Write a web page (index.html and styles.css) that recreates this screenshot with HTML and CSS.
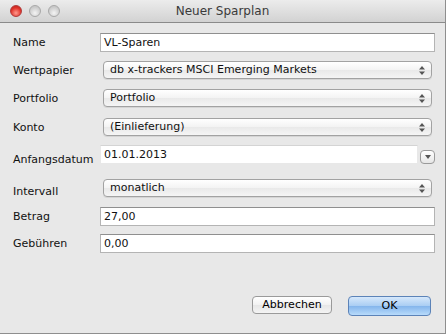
FILE: index.html
```html
<!DOCTYPE html>
<html lang="de">
<head>
    <meta charset="UTF-8">
    <title>Neuer Sparplan</title>
    <link rel="stylesheet" href="styles.css">
</head>
<body>
    <div class="window">
        <div class="titlebar">
            <div class="lights">
                <span class="light close"></span>
                <span class="light"></span>
                <span class="light"></span>
            </div>
            <div class="title">Neuer Sparplan</div>
        </div>
        <div class="form">
            <div class="row r-name">
                <label>Name</label>
                <div class="field">VL-Sparen</div>
            </div>
            <div class="row r-wp">
                <label>Wertpapier</label>
                <div class="popup">db x-trackers MSCI Emerging Markets<svg class="arrows" width="6" height="9" viewBox="0 0 6 9"><path d="M3 0 L6 3.5 L0 3.5 Z M3 9 L6 5.5 L0 5.5 Z" fill="#555"/></svg></div>
            </div>
            <div class="row r-pf">
                <label>Portfolio</label>
                <div class="popup">Portfolio<svg class="arrows" width="6" height="9" viewBox="0 0 6 9"><path d="M3 0 L6 3.5 L0 3.5 Z M3 9 L6 5.5 L0 5.5 Z" fill="#555"/></svg></div>
            </div>
            <div class="row r-konto">
                <label>Konto</label>
                <div class="popup">(Einlieferung)<svg class="arrows" width="6" height="9" viewBox="0 0 6 9"><path d="M3 0 L6 3.5 L0 3.5 Z M3 9 L6 5.5 L0 5.5 Z" fill="#555"/></svg></div>
            </div>
            <div class="row r-date">
                <label class="low">Anfangsdatum</label>
                <div class="date">
                    <div class="field">01.01.2013</div>
                    <div class="drop"><svg width="6" height="4" viewBox="0 0 6 4"><path d="M0 0 L6 0 L3 4 Z" fill="#555"/></svg></div>
                </div>
            </div>
            <div class="row r-int">
                <label class="low2">Intervall</label>
                <div class="popup">monatlich<svg class="arrows" width="6" height="9" viewBox="0 0 6 9"><path d="M3 0 L6 3.5 L0 3.5 Z M3 9 L6 5.5 L0 5.5 Z" fill="#555"/></svg></div>
            </div>
            <div class="row r-betrag">
                <label>Betrag</label>
                <div class="field">27,00</div>
            </div>
            <div class="row r-geb">
                <label>Gebühren</label>
                <div class="field">0,00</div>
            </div>
        </div>
        <div class="buttons">
            <div class="btn">Abbrechen</div>
            <div class="btn ok">OK</div>
        </div>
    </div>
</body>
</html>
```

FILE: styles.css
```css
body {
    margin: 0;
    background: #ffffff;
    font-family: "DejaVu Sans", "Liberation Sans", sans-serif;
    font-size: 11px;
    color: #111;
}

.window {
    width: 445px;
    height: 333px;
    background: #e8e8e8;
    border-right: 1px solid #8e8e8e;
    border-bottom: 1px solid #8e8e8e;
    display: flex;
    flex-direction: column;
}

.titlebar {
    height: 22px;
    border-bottom: 1px solid #8a8a8a;
    background: linear-gradient(#ececec, #d2d2d2);
    display: flex;
    align-items: center;
    position: relative;
}

.lights {
    display: flex;
    gap: 7px;
    padding-left: 10px;
}

.light {
    width: 12px;
    height: 12px;
    border-radius: 50%;
    box-sizing: border-box;
    border: 1px solid #a8a8a8;
    background: radial-gradient(circle at 50% 70%, #f4f4f4, #c9c9c9 70%);
}

.light.close {
    border-color: #b03a3a;
    background: radial-gradient(circle at 50% 70%, #ff9a8e, #e0332a 60%, #b51e18);
}

.title {
    position: absolute;
    left: 0;
    right: 0;
    text-align: center;
    font-size: 12px;
    color: #3a3a3a;
}

.form {
    padding: 10px 10px 0 13px;
    display: flex;
    flex-direction: column;
}

.row {
    display: grid;
    grid-template-columns: 87px 335px;
    align-items: start;
}

.row label {
    height: 19px;
    line-height: 19px;
}

.row label.low {
    padding-top: 5px;
}

.row label.low2 {
    padding-top: 3px;
}

.r-name { height: 28px; }
.r-wp { height: 28px; }
.r-pf { height: 29px; }
.r-konto { height: 27px; }
.r-date { height: 34px; }
.r-int { height: 28px; }
.r-betrag { height: 27px; }
.r-geb { height: 19px; }

.field {
    height: 19px;
    box-sizing: border-box;
    background: #ffffff;
    border: 1px solid #b4b4b4;
    border-top-color: #8f8f8f;
    padding-left: 3px;
    line-height: 17px;
}

.popup {
    margin: 0 3px;
    height: 18px;
    box-sizing: border-box;
    border: 1px solid #a2a2a2;
    border-radius: 4px;
    background: linear-gradient(#ffffff, #f3f3f3 50%, #e9e9e9 51%, #f5f5f5);
    box-shadow: 0 1px 0 rgba(0, 0, 0, 0.08);
    padding-left: 6px;
    line-height: 16px;
    display: flex;
    justify-content: space-between;
    align-items: center;
}

.arrows {
    margin-right: 6px;
}

.date {
    display: flex;
    align-items: center;
    gap: 2px;
}

.date .field {
    width: 318px;
    border-color: #e8e8e8;
    border-top-color: #d4d4d4;
}

.drop {
    margin-top: 4px;
    width: 15px;
    height: 14px;
    box-sizing: border-box;
    border: 1px solid #9a9a9a;
    border-radius: 4px;
    background: linear-gradient(#ffffff, #e6e6e6);
    display: flex;
    justify-content: center;
    align-items: center;
}

.buttons {
    margin-top: auto;
    margin-bottom: 17px;
    padding-right: 14px;
    display: flex;
    justify-content: flex-end;
    gap: 16px;
}

.btn {
    width: 80px;
    height: 18px;
    box-sizing: border-box;
    border: 1px solid #9a9a9a;
    border-radius: 4px;
    background: linear-gradient(#ffffff, #f1f1f1 50%, #e6e6e6 51%, #f4f4f4);
    text-align: center;
    line-height: 16px;
    color: #000;
}

.btn.ok {
    width: 83px;
    height: 20px;
    line-height: 18px;
    border-color: #5c83b8;
    background: linear-gradient(#d6e8fb, #a9cdf3 50%, #84b5ec 51%, #b8dbfb);
}
```
